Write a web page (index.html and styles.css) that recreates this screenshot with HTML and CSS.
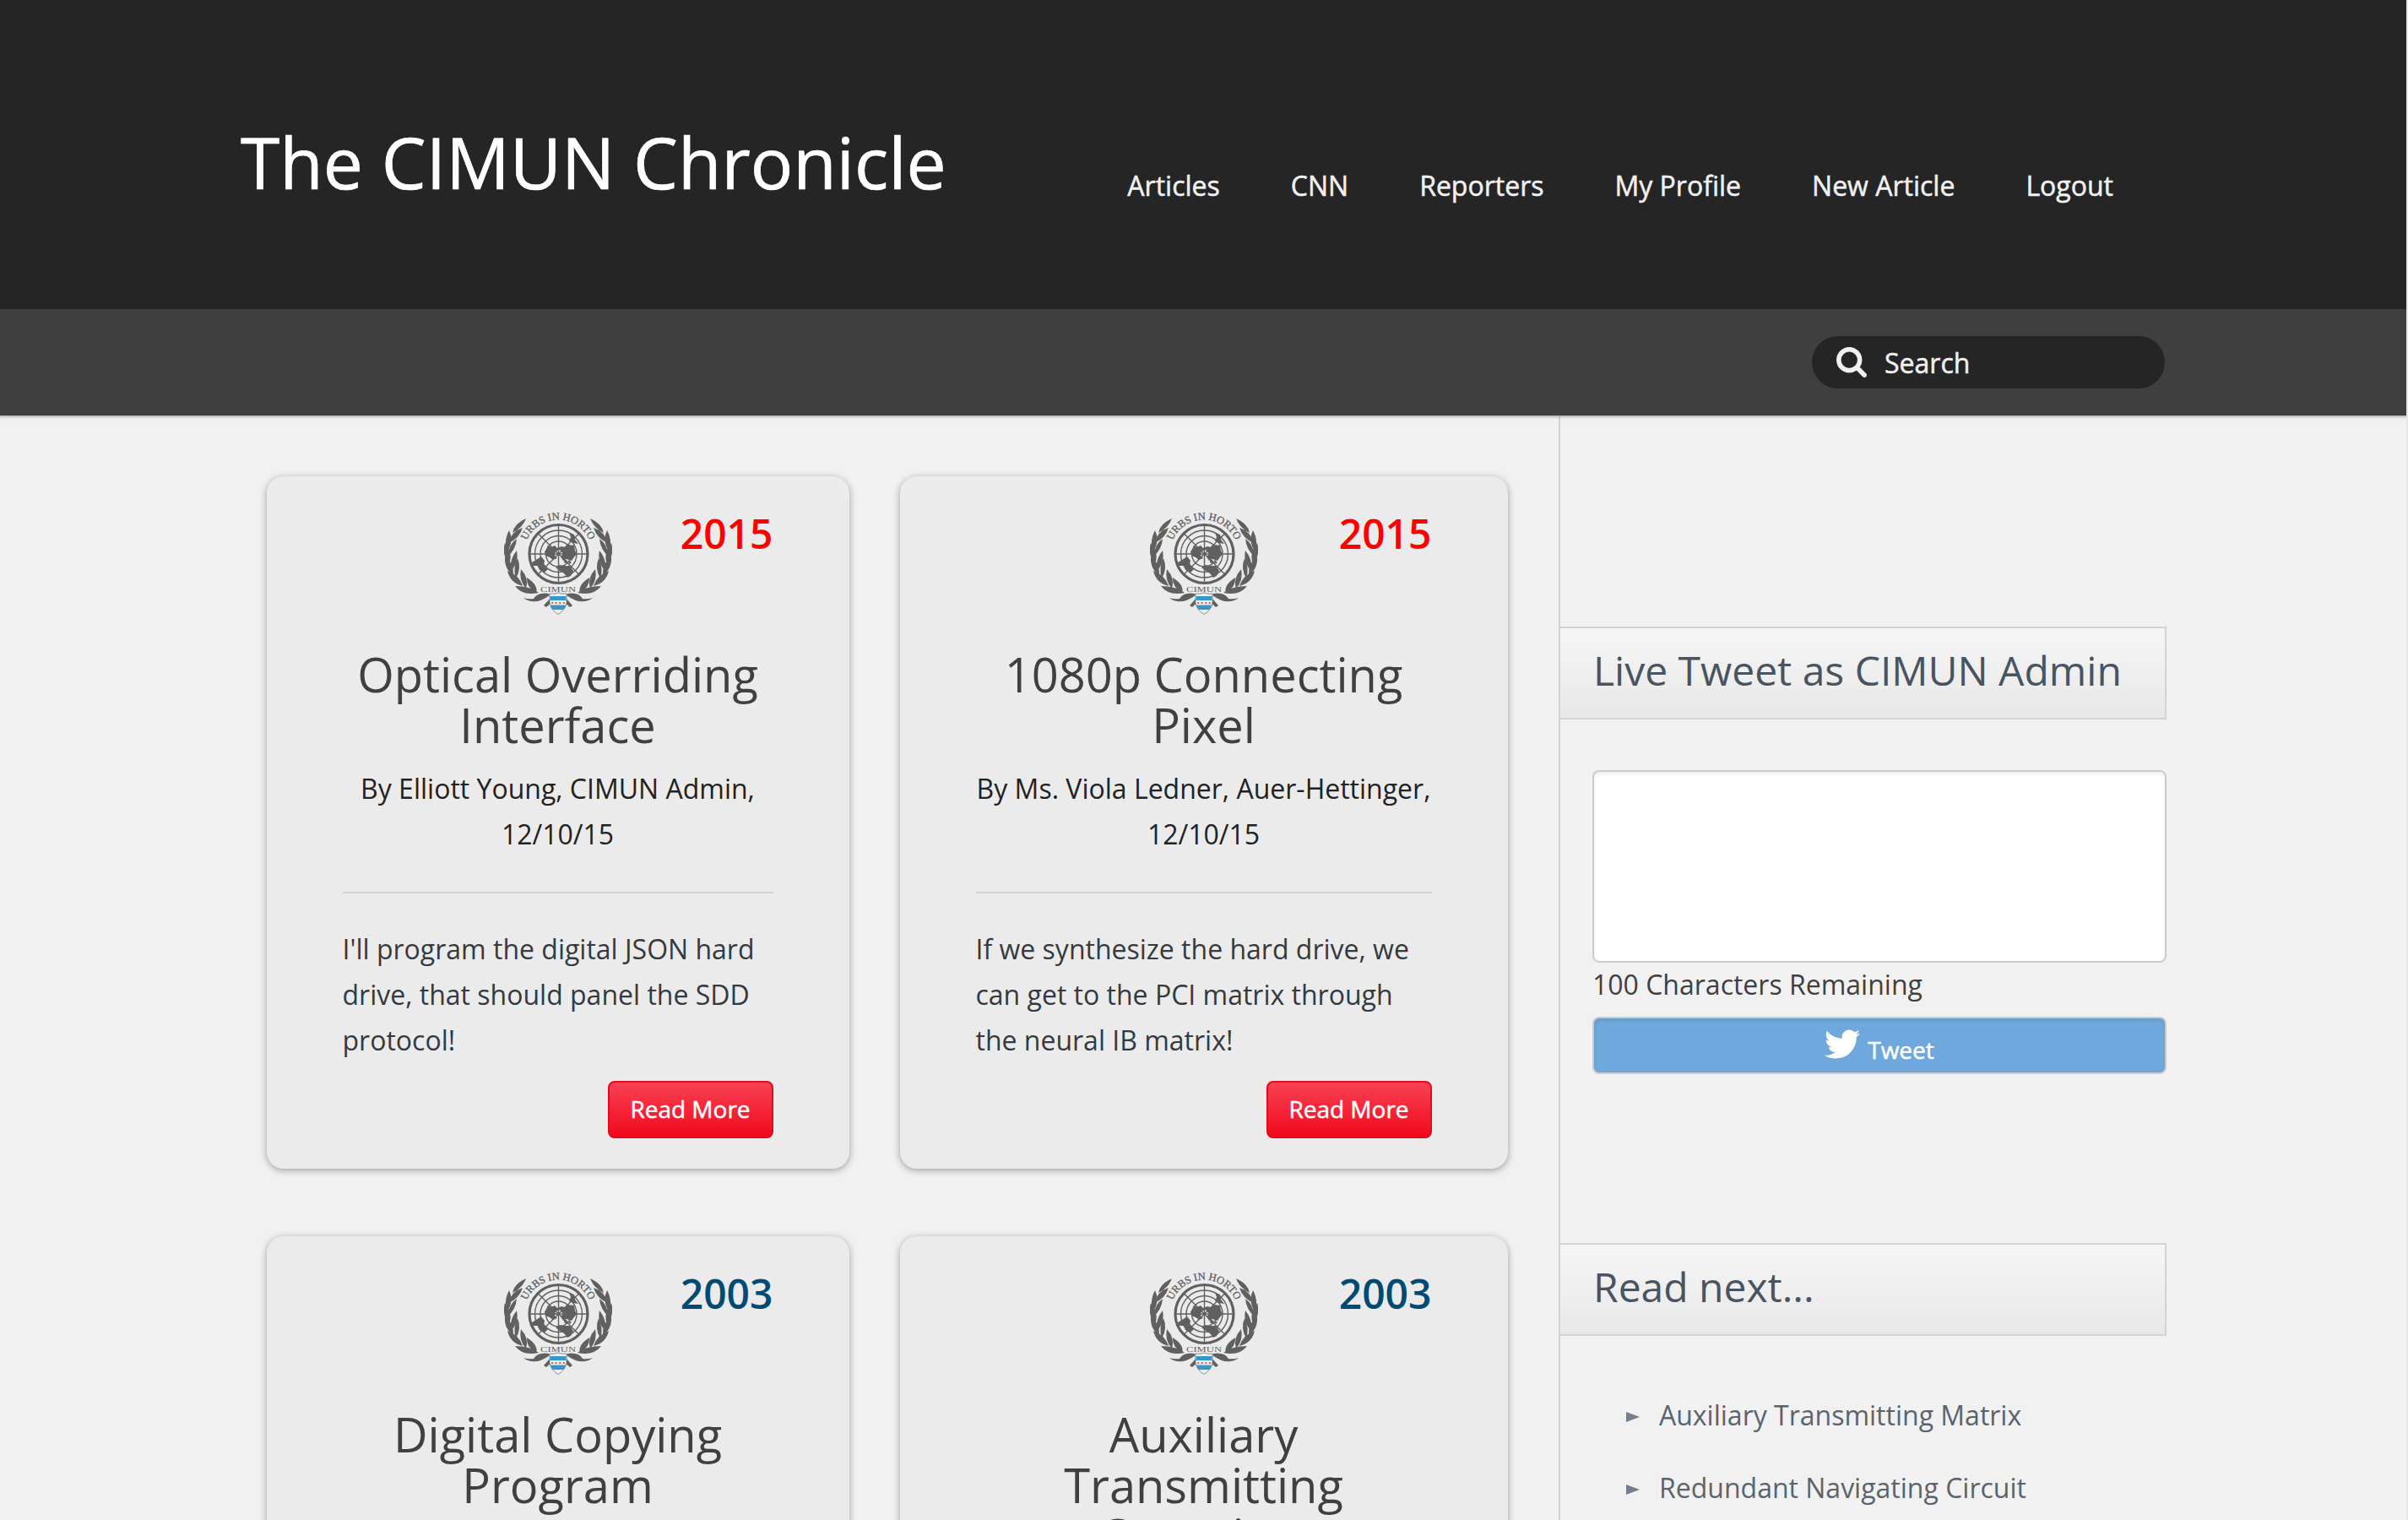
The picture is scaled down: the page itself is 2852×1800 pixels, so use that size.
FILE: index.html
```html
<!DOCTYPE html>
<html lang="en">
<head>
<meta charset="utf-8">
<title>The CIMUN Chronicle</title>
<link rel="stylesheet" href="styles.css">
</head>
<body>
<svg class="defs" aria-hidden="true">
  <defs>
    <path id="motto-arc" d="M23.500 49A40.500 40.500 0 0 1 104.500 49"/>
    <g id="branch">
      <path d="M26 7Q12 13 10 24Q22 18 26 7ZM22 18Q9 22 5 36Q18 31 22 18Z"/>
      <path d="M6 21Q-1 34 4 46Q12 33 6 21ZM15 31Q6 37 4 52Q14 44 15 31Z"/>
      <path d="M1 36Q-3 50 6 61Q11 48 1 36ZM15 45Q6 56 8 69Q18 60 15 45Z"/>
      <path d="M1 52Q0 67 11 74Q12 60 1 52ZM16 54Q10 66 14 78Q21 66 16 54Z"/>
      <path d="M4 69Q7 83 22 87Q18 74 4 69ZM20 67Q17 80 26 90Q30 78 20 67Z"/>
      <path d="M13 87Q22 99 41 95Q31 87 13 87ZM27 77Q26 88 38 95Q41 86 27 77Z"/>
      <path d="M23 101Q36 111 54 98L53 96Q40 94 35 102Q29 103 23 101Z"/>
    </g>
    <symbol id="emblem" viewBox="0 0 128 122">
      <g fill="#606060">
        <use href="#branch"/>
        <use href="#branch" transform="matrix(-1 0 0 1 128 0)"/>
        <path d="M55 101L47 110L50 112L58 105ZM73 101L81 110L78 112L70 105Z"/>
      </g>
      <g fill="none" stroke="#606060">
        <circle cx="64.500" cy="49" r="34.500" stroke-width="3.200"/>
        <g stroke-width="1.400">
          <circle cx="64.500" cy="49" r="28"/><circle cx="64.500" cy="49" r="21.500"/><circle cx="64.500" cy="49" r="15"/>
          <path d="M64.500 14V84M30 49H99M40 24.500L89 73.500M89 24.500L40 73.500"/>
        </g>
      </g>
      <g fill="#606060">
        <path d="M48 46L52 42L51 39L56 41L60 39L63 42L68 40L72 41L76 38L83 39L84 45L86 49L82 54L80 57L74 55L70 57L67 52L70 49L66 44L61 46L60 51L63 54L58 56L54 53L49 51Z"/>
        <path d="M33 59L38 56L44 52L48 57L47 62L52 67L48 71L42 68L40 63L34 63Z"/>
        <path d="M61 65L65 62L72 63L78 63L82 69L79 75L75 77L71 72L66 69Z"/>
        <path d="M77 24L83 26L84 32L88 37L82 36L77 34L79 29Z"/>
        <circle cx="73" cy="58" r="2"/><circle cx="78" cy="59" r="1.500"/>
      </g>
      <text class="emblem-text" font-size="12.500" text-anchor="middle" stroke="#606060" stroke-width=".3"><textPath href="#motto-arc" startOffset="50%">URBS IN HORTO</textPath></text>
      <text class="emblem-text" x="64" y="94" font-size="9" text-anchor="middle" textLength="42" lengthAdjust="spacingAndGlyphs">CIMUN</text>
      <path d="M54 96Q59 97 64 95Q69 97 74 96V107Q73 115 64 120.500Q55 115 54 107Z" fill="#f0f0f0" stroke="#777" stroke-width=".8"/>
      <path d="M54.500 99H73.500V104H54.500ZM54.800 109.500H73.200Q72.300 113 70 115H58Q55.700 113 54.800 109.500Z" fill="#3398cc"/>
      <path d="M56.200 107H58.200M60.600 107H62.600M65.200 107H67.200M69.800 107H71.800" stroke="#e4553f" stroke-width="2.200"/>
    </symbol>
  </defs>
</svg>

<header class="masthead">
  <h1 class="brand">The CIMUN Chronicle</h1>
  <nav class="nav">
    <a>Articles</a><a>CNN</a><a>Reporters</a><a>My Profile</a><a>New Article</a><a>Logout</a>
  </nav>
</header>
<div class="toolbar">
  <div class="search">
    <svg class="search-icon" viewBox="0 0 1664 1664"><path fill="#f1f1f1" d="M1152 704q0-185-131.500-316.500T704 256 387.500 387.500 256 704t131.500 316.500T704 1152t316.500-131.500T1152 704zm512 832q0 52-38 90t-90 38q-54 0-90-38l-343-342q-179 124-399 124-143 0-273.500-55.500t-225-150-150-225T0 704t55.500-273.500 150-225 225-150T704 0t273.500 55.500 225 150 150 225T1408 704q0 220-124 399l343 343q37 37 37 90z"/></svg>
    <span>Search</span>
  </div>
</div>

<div class="page">
  <main class="articles">
    <article class="card">
      <div class="card-top"><svg class="emblem"><use href="#emblem"/></svg><span class="year">2015</span></div>
      <h2 class="card-title">Optical Overriding Interface</h2>
      <p class="byline">By Elliott Young, CIMUN Admin, 12/10/15</p>
      <p class="excerpt">I'll program the digital JSON hard drive, that should panel the SDD protocol!</p>
      <a class="read-more">Read More</a>
    </article>
    <article class="card">
      <div class="card-top"><svg class="emblem"><use href="#emblem"/></svg><span class="year">2015</span></div>
      <h2 class="card-title">1080p Connecting Pixel</h2>
      <p class="byline">By Ms. Viola Ledner, Auer-Hettinger, 12/10/15</p>
      <p class="excerpt">If we synthesize the hard drive, we can get to the PCI matrix through the neural IB matrix!</p>
      <a class="read-more">Read More</a>
    </article>
    <article class="card">
      <div class="card-top"><svg class="emblem"><use href="#emblem"/></svg><span class="year year-old">2003</span></div>
      <h2 class="card-title">Digital Copying Program</h2>
    </article>
    <article class="card">
      <div class="card-top"><svg class="emblem"><use href="#emblem"/></svg><span class="year year-old">2003</span></div>
      <h2 class="card-title">Auxiliary Transmitting Capacitor</h2>
    </article>
  </main>
  <aside class="sidebar">
    <h3 class="side-title">Live Tweet as CIMUN Admin</h3>
    <form class="tweet-form">
      <textarea class="tweet-box"></textarea>
      <p class="remaining">100 Characters Remaining</p>
      <button class="tweet-button" type="button">
        <svg class="bird" viewBox="44 256 1576 1280"><path fill="#fff" d="M1620 408q-67 98-162 167 1 14 1 42 0 130-38 259.500T1305.500 1125 1121 1335.500t-258 146-323 54.500q-271 0-496-145 35 4 78 4 225 0 401-138-105-2-188-64.500T221 1033q33 5 61 5 43 0 85-11-112-23-185.500-111.500T108 710v-4q68 38 146 41-66-44-105-115t-39-154q0-88 44-163 121 149 294.500 238.500T820 653q-8-38-8-74 0-134 94.500-228.500T1135 256q140 0 236 102 109-21 205-78-37 115-142 178 93-10 186-50z"/></svg>
        <span>Tweet</span>
      </button>
    </form>
    <h3 class="side-title">Read next...</h3>
    <ul class="next-list">
      <li>Auxiliary Transmitting Matrix</li>
      <li>Redundant Navigating Circuit</li>
    </ul>
  </aside>
</div>
</body>
</html>
```
FILE: styles.css
```css
* { box-sizing: border-box; }
html, body { height: 1800px; overflow: hidden; }
body {
  margin: 0;
  display: flex;
  flex-direction: column;
  border-right: 2px solid #e8e8e8;
  background: #f1f1f1;
  color: #404040;
  font-family: "Open Sans", sans-serif;
  font-size: 32px;
}
h1, h2, h3, p, ul { margin: 0; padding: 0; font-weight: 400; }
.defs { display: none; }

.masthead {
  flex: none;
  height: 366px;
  padding: 0 347px 0 285px;
  display: flex;
  justify-content: space-between;
  background: #252525;
}
.brand { color: #fff; font-size: 84px; line-height: 120px; padding-top: 132px; white-space: nowrap; -webkit-text-stroke: .7px; }
.nav { display: flex; gap: 84px; padding-top: 190px; color: #f1f1f1; line-height: 60px; white-space: nowrap; -webkit-text-stroke: .5px; }

.toolbar {
  flex: none;
  position: relative;
  height: 126px;
  padding: 32px 286px 0 0;
  display: flex;
  justify-content: flex-end;
  align-items: flex-start;
  background: #3f3f3f;
  box-shadow: 0 1px 0 #b3afaf, 0 3px 2px rgba(0, 0, 0, .15);
}
.search {
  width: 418px;
  height: 62px;
  padding-left: 29px;
  display: flex;
  align-items: center;
  gap: 21px;
  border-radius: 31px;
  background: #252525;
  color: #f1f1f1;
  line-height: 62px;
  -webkit-text-stroke: .5px;
}
.search span { padding-top: 1px; }
.search-icon { width: 36px; height: 36px; }

.page { flex: 1; min-height: 0; display: flex; padding: 0 284px 0 316px; overflow: hidden; }
.articles {
  width: 1530px;
  padding: 72px 60px 0 0;
  display: grid;
  grid-template-columns: 690px 720px;
  grid-auto-rows: 820px;
  gap: 80px 60px;
}
.card {
  padding: 40px 90.5px 0 89.5px;
  display: flex;
  flex-direction: column;
  border-radius: 20px;
  background: #ebebeb;
  box-shadow: 0 2px 8px rgba(0, 0, 0, .35);
}
.card-top { height: 140px; display: grid; grid-template-columns: 1fr 128px 1fr; }
.emblem { grid-column: 2; width: 128px; height: 122px; margin-top: 3px; overflow: visible; }
.emblem-text { font-family: "Liberation Serif", serif; fill: #606060; }
.year { grid-column: 3; justify-self: end; font-size: 48px; font-weight: 600; line-height: 56px; color: #f00; }
.year-old { color: #004b76; }
.card-title { margin-top: 24px; font-size: 56px; line-height: 60px; text-align: center; color: #404040; }
.byline { margin-top: 19px; padding-bottom: 41px; border-bottom: 2px solid #cdd4da; color: #222; line-height: 54px; text-align: center; }
.excerpt { margin-top: 39px; color: #343a40; line-height: 54px; }
.read-more {
  align-self: flex-end;
  width: 196px;
  height: 68px;
  margin-top: 21px;
  border: 2px solid #e30b1c;
  border-radius: 8px;
  background: linear-gradient(#f94154, #ef0a1b);
  color: #fff;
  font-size: 28px;
  line-height: 63px;
  text-align: center;
  -webkit-text-stroke: .5px;
}

.sidebar { width: 720px; padding-top: 250px; border-left: 2px solid #cdd4da; }
.side-title {
  height: 110px;
  padding-left: 39px;
  border: 2px solid #cdd4da;
  border-left: 0;
  background: linear-gradient(#f6f6f6, #e8e8e8);
  color: #495461;
  font-size: 48px;
  line-height: 99px;
  white-space: nowrap;
}
.tweet-form { height: 620px; padding: 60px 0 0 38px; display: flex; flex-direction: column; }
.tweet-box {
  height: 228px;
  border: 2px solid #ccc;
  border-radius: 8px;
  background: #fff;
  box-shadow: inset 0 2px 4px rgba(0, 0, 0, .08);
  resize: none;
}
.remaining { height: 64px; line-height: 52px; }
.tweet-button {
  height: 68px;
  padding: 0;
  display: flex;
  justify-content: center;
  gap: 9px;
  border: 2px solid #ccc;
  border-radius: 8px;
  background: #6fa8dc;
  box-shadow: inset 0 2px 4px rgba(0, 0, 0, .1);
  color: #fff;
  font: 28px/75px "Open Sans", sans-serif;
  -webkit-text-stroke: .5px;
}
.bird { width: 42px; height: 35px; margin-top: 13px; }
.next-list { padding: 51px 0 0 117px; list-style: none; color: #5b646b; }
.next-list li { position: relative; height: 86px; line-height: 86px; white-space: nowrap; }
.next-list li::before {
  content: "";
  position: absolute;
  left: -39px;
  top: 39px;
  border: solid transparent;
  border-width: 6px 0 6px 16px;
  border-left-color: #727e8b;
}
```
